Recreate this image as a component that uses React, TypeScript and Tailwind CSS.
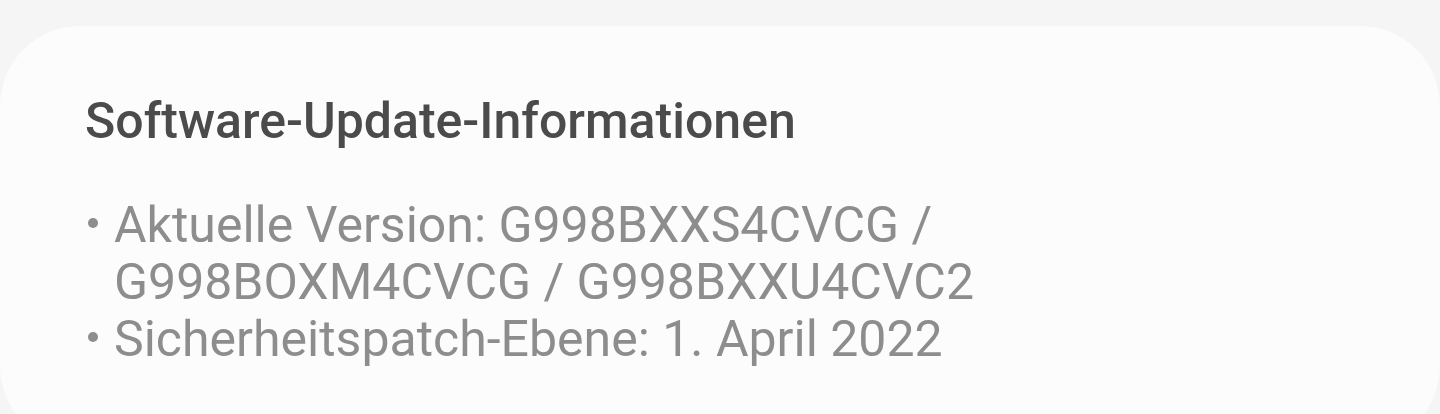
export default function App() {
  const items = [
    "Aktuelle Version: G998BXXS4CVCG / G998BOXM4CVCG / G998BXXU4CVC2",
    "Sicherheitspatch-Ebene: 1. April 2022",
  ];

  return (
    <div className="h-[414px] w-[1440px] overflow-hidden bg-[#f5f5f5] pt-[26px]" style={{ fontFamily: "Roboto, sans-serif" }}>
      <div className="h-[420px] rounded-[80px] bg-[#fcfcfc] pl-[85px] pr-[40px] pt-[65px]">
        <h2 className="text-[50px] font-medium leading-[60px] text-[#4b4b4b]">Software-Update-Informationen</h2>
        <ul className="mt-[46px] w-[900px]">
          {items.map((item) => (
            <li key={item} className="flex text-[50px] leading-[57px] text-[#8d8d8d]">
              <span className="flex h-[57px] w-[29px] shrink-0 items-center">
                <span className="mb-[6px] ml-[3px] h-[10px] w-[10px] rounded-full bg-[#8d8d8d]" />
              </span>
              <span>{item}</span>
            </li>
          ))}
        </ul>
      </div>
    </div>
  );
}
